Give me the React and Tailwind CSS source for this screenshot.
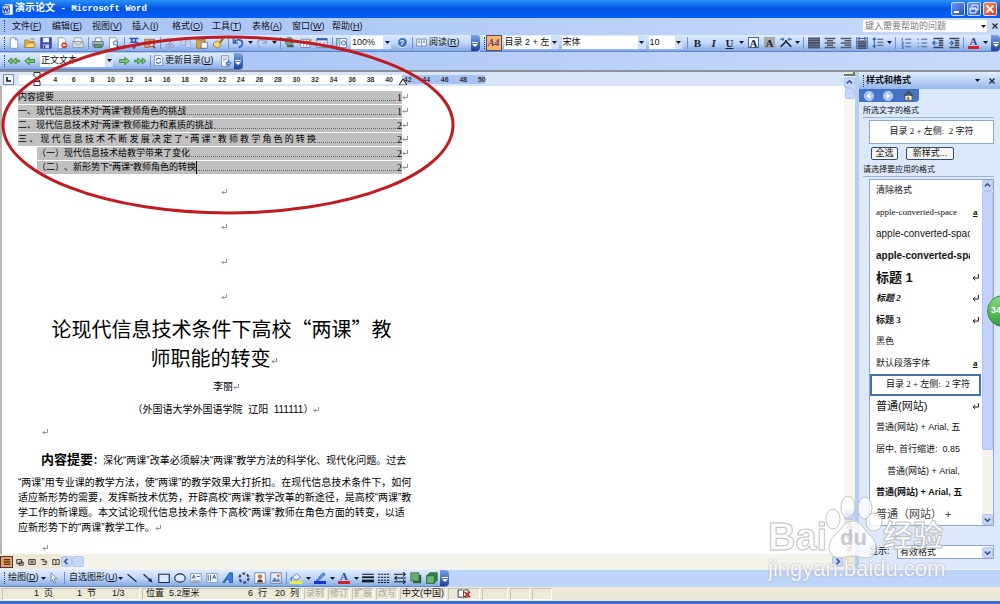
import { clsx } from 'clsx';

const menus = [
  ['文件', 'F'],
  ['编辑', 'E'],
  ['视图', 'V'],
  ['插入', 'I'],
  ['格式', 'O'],
  ['工具', 'T'],
  ['表格', 'A'],
  ['窗口', 'W'],
  ['帮助', 'H'],
];

const rulerMarks = Array.from({ length: 24 }, (_, i) => 4 + i * 2);

const toc = [
  { text: '内容提要', page: 1 },
  { text: '一、现代信息技术对“两课”教师角色的挑战', page: 1 },
  { text: '二、现代信息技术对“两课”教师能力和素质的挑战', page: 2 },
  { text: '三、现代信息技术不断发展决定了“两课”教师教学角色的转换', page: 2, spread: true },
  { text: '（一）现代信息技术给教学带来了变化', page: 2, indent: true },
  { text: '（二）、新形势下“两课”教师角色的转换', page: 2, indent: true, caret: true },
];

const bodyLines = [
  '“两课”用专业课的教学方法，使“两课”的教学效果大打折扣。在现代信息技术条件下，如何',
  '适应新形势的需要，发挥新技术优势，开辟高校“两课”教学改革的新途径，是高校“两课”教',
  '学工作的新课题。本文试论现代信息技术条件下高校“两课”教师在角色方面的转变，以适',
];

const styles = [
  { name: '清除格式', look: 'text-[9px]' },
  { name: 'apple-converted-space', look: "text-[9px] font-['Liberation_Serif',serif]", mark: 'a' },
  { name: 'apple-converted-space', look: 'text-[10px]' },
  { name: 'apple-converted-space', look: 'text-[10px] font-bold' },
  { name: '标题 1', look: 'text-[13px] font-bold', mark: 'p' },
  { name: '标题 2', look: "text-[9px] font-bold italic font-['Liberation_Serif','Noto_Sans_CJK_SC',serif]", mark: 'p' },
  { name: '标题 3', look: "text-[9px] font-bold font-['Liberation_Serif','Noto_Sans_CJK_SC',serif]", mark: 'p' },
  { name: '黑色', look: 'text-[9px]' },
  { name: '默认段落字体', look: 'text-[9px]', mark: 'a' },
  { name: '目录 2 + 左侧:  2 字符', look: "text-[9px] pl-[10px] font-['Liberation_Serif','Noto_Sans_CJK_SC',serif]", selected: true },
  { name: '普通(网站)', look: 'text-[11px]', mark: 'p' },
  { name: '普通(网站) + Arial, 五', look: 'text-[9px]' },
  { name: '居中, 首行缩进:  0.85 ', look: 'text-[9px]' },
  { name: '普通(网站) + Arial,', look: 'text-[9px] pl-[11px]' },
  { name: '普通(网站) + Arial, 五', look: 'text-[9px] font-bold' },
  { name: '普通（网站） + ', look: 'text-[11px] text-[#444]' },
];

const art = {
  page: <path d="M3 1h7l3 3v11H3zM10 1v3h3" fill="#fff" stroke="#6b7fa8" />,
  open: (
    <>
      <path d="M1 4h5l1 2h6v8H1z" fill="#e8b23c" stroke="#a87818" />
      <path d="M1 14l3-6h11l-2 6z" fill="#ffd873" stroke="#a87818" />
      <path d="M9 3c2-2 4-1 4 1" fill="none" stroke="#3a58a0" />
    </>
  ),
  save: (
    <>
      <path d="M1 1h14v14H1z" fill="#4550b8" stroke="#2a3080" />
      <path d="M4 1h8v6H4z" fill="#f0f2fc" />
      <path d="M4 10h8v5H4z" fill="#c8cce8" />
      <path d="M5 11h2v4H5z" fill="#2a3080" />
    </>
  ),
  perm: (
    <>
      <path d="M3 1h7l3 3v11H3z" fill="#fff" stroke="#7788aa" />
      <circle cx="11" cy="11" r="4" fill="#d4452e" />
      <path d="M9 11h4" stroke="#fff" strokeWidth="2" />
    </>
  ),
  mail: (
    <>
      <path d="M4 1h8l2 5H2z" fill="#f5f5f5" stroke="#8890a0" />
      <path d="M1 6h14v8H1z" fill="#d8dce4" stroke="#8890a0" />
      <path d="M1 6l7 5 7-5" fill="none" stroke="#8890a0" />
    </>
  ),
  print: (
    <>
      <path d="M4 6l1-5h7l1 5" fill="#fff" stroke="#607090" />
      <path d="M1 6h14v6H1z" fill="#a9b4bc" stroke="#506070" />
      <path d="M3 10h10v4H3z" fill="#5f9d70" stroke="#406850" />
    </>
  ),
  preview: (
    <>
      <path d="M2 1h8l2 3v11H2z" fill="#fff" stroke="#7788aa" />
      <circle cx="10" cy="8" r="3" fill="#bfe0f5" stroke="#506080" />
      <path d="M12 11l3 4" stroke="#506080" strokeWidth="2" />
    </>
  ),
  spell: (
    <>
      <path d="M2 2h12M5 2v5M10 2v5M3 7h9" stroke="#3050a8" strokeWidth="2" />
      <path d="M5 11l3 4 6-8" fill="none" stroke="#5a48b8" strokeWidth="2" />
    </>
  ),
  research: (
    <>
      <path d="M1 3h6v11H1zM8 3h6v7H8z" fill="#e3a060" stroke="#9a5030" />
      <circle cx="10" cy="10" r="3" fill="#cfe4f8" stroke="#8a3020" />
      <path d="M12 12l3 3" stroke="#8a3020" strokeWidth="2" />
    </>
  ),
  cut: (
    <>
      <path d="M5 1l5 9M11 1L6 10" stroke="#94a6cc" strokeWidth="1.6" />
      <circle cx="5" cy="12" r="2.4" fill="none" stroke="#94a6cc" strokeWidth="1.6" />
      <circle cx="11" cy="12" r="2.4" fill="none" stroke="#94a6cc" strokeWidth="1.6" />
    </>
  ),
  copy: <path d="M1 2h7v9H1zM7 5h7v9H7z" fill="#c4d4f0" stroke="#94a6cc" />,
  paste: (
    <>
      <path d="M1 3h11v12H1z" fill="#e4a540" stroke="#94601c" />
      <path d="M4 1h5v3H4z" fill="#c8c8c8" stroke="#606060" />
      <path d="M7 7h8v8H7z" fill="#fff" stroke="#5068a0" />
    </>
  ),
  brush: (
    <>
      <path d="M9 7l5-6 2 2-5 6z" fill="#a06828" />
      <path d="M2 8l5-3 5 5-4 5-6-3z" fill="#f0dc70" stroke="#8a6a20" />
    </>
  ),
  undo: <path d="M2 2v6h6M3 7c3-5 11-4 11 1 0 3-2 5-5 6" fill="none" stroke="#2c5fc8" strokeWidth="2.2" />,
  redo: <path d="M14 2v6H8M13 7C10 2 2 3 2 8c0 3 2 5 5 6" fill="none" stroke="#94a9d4" strokeWidth="2" />,
  link: (
    <>
      <circle cx="7" cy="6" r="5.5" fill="#6aa888" stroke="#406878" />
      <path d="M3 4c3 3 6 0 8 3" stroke="#2858a8" fill="none" strokeWidth="2" />
      <path d="M4 12h4M8 12h5" stroke="#505860" strokeWidth="3" />
    </>
  ),
  tables: (
    <>
      <path d="M1 3h12v11H1zM1 7h12M5 3v11M9 3v11" fill="#fff" stroke="#5878b8" />
      <path d="M8 9l6-7 2 2-6 7z" fill="#e48c30" />
    </>
  ),
  columns: (
    <>
      <path d="M1 2h14v12H1z" fill="#eef4ff" stroke="#5878b8" />
      <path d="M1 3h14" stroke="#3860b0" strokeWidth="3" />
      <path d="M3 7h4M3 9h4M3 11h4M9 7h4M9 9h4M9 11h4" stroke="#8898b8" />
    </>
  ),
  docmap: (
    <>
      <path d="M1 2h13v12H1z" fill="#fff" stroke="#5878a0" />
      <path d="M1 2h4v12H1z" fill="#b8d4c0" stroke="#5878a0" />
      <circle cx="10" cy="8" r="3" fill="#c5e0f8" stroke="#405880" />
    </>
  ),
  book: <path d="M1 3h5l2 1 2-1h5v10h-5l-2 1-2-1H1zM8 4v10M3 6h3M3 8h3M10 6h3M10 8h3" fill="#f4f8ff" stroke="#5a6888" />,
  greenLeft: <path d="M1 8l6-5v3h7v4H7v3z" fill="#7cc860" stroke="#2c7838" />,
  greenRight: <path d="M15 8L9 3v3H2v4h7v3z" fill="#7cc860" stroke="#2c7838" />,
  greenLeft2: <path d="M0 8l5-4v3h2l4-3v3h5v2h-5v3L7 9H5v3z" fill="#7cc860" stroke="#2c7838" />,
  greenRight2: <path d="M16 8l-5-4v3H9L5 4v3H0v2h5v3l4-3h2v3z" fill="#7cc860" stroke="#2c7838" />,
  refresh: (
    <>
      <path d="M2 1h9l3 3v11H2z" fill="#fff" stroke="#60789c" />
      <path d="M5 8c0-4 6-4 6-1M11 9c0 4-6 4-6 1" fill="none" stroke="#2858a8" strokeWidth="1.5" />
    </>
  ),
  gotoToc: (
    <>
      <path d="M2 1h9v14H2z" fill="#fff" stroke="#60789c" />
      <path d="M4 4h5M4 6h5M4 8h3" stroke="#8090b0" />
      <path d="M8 10h3V7l4 4-4 4v-2H8z" fill="#80b0e8" stroke="#2858a8" />
    </>
  ),
  phonetic: (
    <>
      <path d="M1 13l7-7 7 7M8 7V4" fill="none" stroke="#18233c" strokeWidth="2.2" />
      <path d="M0 3h5M3 1l2 2-2 2M16 3h-5M13 1l-2 2 2 2" fill="none" stroke="#2c6cb0" strokeWidth="1.4" />
    </>
  ),
  alignFull: <path d="M0 2h16M0 5h16M0 8h16M0 11h16M0 14h16" stroke="#4c5468" strokeWidth="2.4" />,
  alignCenter: <path d="M1 2h14M4 5h8M1 8h14M4 11h8M1 14h14" stroke="#4c5468" strokeWidth="2.2" />,
  alignRight: <path d="M1 2h14M6 5h9M1 8h14M6 11h9M1 14h14" stroke="#4c5468" strokeWidth="2.2" />,
  distribute: (
    <>
      <path d="M2 6h12M2 9h12M2 12h12M2 15h12" stroke="#4c5468" strokeWidth="2.4" />
      <path d="M1 0v16M15 0v16M3 2h10M5 0L3 2l2 2M11 0l2 2-2 2" fill="none" stroke="#4468b0" strokeWidth="1.4" />
    </>
  ),
  spacing: (
    <>
      <path d="M7 3h8M7 7h8M7 11h8" stroke="#4c5468" strokeWidth="1.5" />
      <path d="M3 1v13M1 4l2-3 2 3M1 11l2 3 2-3" fill="none" stroke="#2c5fb0" strokeWidth="1.4" />
    </>
  ),
  numbered: <path d="M3 1v4M2 7h2v3H2M2 12h2v3H2M7 3h8M7 8h8M7 13h8" fill="none" stroke="#4866a4" strokeWidth="1.4" />,
  bullets: <path d="M2 3h2M2 8h2M2 13h2M7 3h8M7 8h8M7 13h8" stroke="#4866a4" strokeWidth="1.6" />,
  outdent: (
    <>
      <path d="M2 2h13M9 5h6M9 8h6M9 11h6M2 14h13" stroke="#3c4458" strokeWidth="1.8" />
      <path d="M7 8H1M4 5L1 8l3 3" fill="none" stroke="#2c5fb0" strokeWidth="1.6" />
    </>
  ),
  indent: (
    <>
      <path d="M2 2h13M9 5h6M9 8h6M9 11h6M2 14h13" stroke="#3c4458" strokeWidth="1.8" />
      <path d="M1 8h6M4 5l3 3-3 3" fill="none" stroke="#2c5fb0" strokeWidth="1.6" />
    </>
  ),
  pointer: <path d="M4 1l8 8H8l2 5-2 1-2-5-2 3z" fill="#fff" stroke="#5c6c94" />,
  line: <path d="M2 3l12 10" stroke="#1c2848" strokeWidth="1.6" />,
  arrow: (
    <>
      <path d="M2 3l9 8" stroke="#1c2848" strokeWidth="1.6" />
      <path d="M14 14l-6-2 4-4z" fill="#1c2848" />
    </>
  ),
  rect: <path d="M1 3h14v11H1z" fill="#dce8fc" stroke="#1c2848" strokeWidth="1.5" />,
  oval: <ellipse cx="8" cy="8" rx="7" ry="5.5" fill="#dce8fc" stroke="#1c2848" strokeWidth="1.5" />,
  textbox: (
    <>
      <path d="M1 2h14v12H1z" fill="#f0f4fc" stroke="#7888a8" />
      <path d="M3 9l2-5 2 5M4 7h2M9 6h4M3 12h10" fill="none" stroke="#303c58" />
    </>
  ),
  vtextbox: (
    <>
      <path d="M1 2h14v12H1z" fill="#f0f4fc" stroke="#7888a8" />
      <path d="M9 9l2-5 2 5M10 7h2M3 4v8M6 4v8" fill="none" stroke="#303c58" />
    </>
  ),
  wordart: <path d="M1 14L10 1h4v13h-4v-4H6l-2 4z" fill="#3c7cd8" stroke="#1c4c98" />,
  diagram: <circle cx="8" cy="8" r="6" fill="none" stroke="#404c78" strokeWidth="3" strokeDasharray="4 2.3" />,
  clipart: (
    <>
      <path d="M1 1h14v14H1z" fill="#fff" stroke="#5c6c8c" />
      <circle cx="8" cy="6" r="3" fill="#c87830" />
      <path d="M4 14c0-6 8-6 8 0z" fill="#503c34" />
    </>
  ),
  picture: (
    <>
      <path d="M1 1h14v14H1z" fill="#e4ecfa" stroke="#5c6c8c" />
      <path d="M2 13l4-6 3 4 2-3 3 5z" fill="#607cb8" />
      <circle cx="11" cy="5" r="1.6" fill="#d04c38" />
    </>
  ),
  fill: (
    <>
      <path d="M3 7l6-5 5 5-6 4z" fill="#e8eef8" stroke="#4c6088" />
      <path d="M3 7c-2 1-2 3-1 5" fill="none" stroke="#3c70c0" strokeWidth="1.6" />
      <path d="M0 12h16v4H0z" fill="#f0ec3c" />
    </>
  ),
  pen: (
    <>
      <path d="M4 10l8-9 3 2-8 8-4 1z" fill="#5c98d8" stroke="#3c5c90" />
      <path d="M0 12h16v4H0z" fill="#1430d8" />
    </>
  ),
  weights: (
    <>
      <path d="M0 3h16" stroke="#101828" strokeWidth="1.4" />
      <path d="M0 7h16" stroke="#101828" strokeWidth="2.4" />
      <path d="M0 12h16" stroke="#101828" strokeWidth="3.6" />
    </>
  ),
  dashes: <path d="M0 3h16M0 7h16M0 11h16M0 14h16" stroke="#101828" strokeWidth="1.4" strokeDasharray="3 1" />,
  arrows: <path d="M0 3h15M12 0l3 3-3 3M1 8h15M4 5L1 8l3 3M0 13h15M12 10l3 3-3 3" fill="none" stroke="#101828" strokeWidth="1.4" />,
  shadow: (
    <>
      <path d="M4 4h11v11H4z" fill="#345c40" />
      <path d="M1 1h11v11H1z" fill="#64b070" stroke="#347044" />
    </>
  ),
  cube: (
    <>
      <path d="M1 5l4-4h10v10l-4 4H1z" fill="#388448" stroke="#246034" />
      <path d="M1 5h10v10H1z" fill="#70b878" stroke="#246034" />
    </>
  ),
};

function Art({ name, className = 'size-3' }) {
  return (
    <svg viewBox="0 0 16 16" className={clsx('shrink-0', className)} aria-hidden="true">
      {art[name]}
    </svg>
  );
}

function Tool({ name, label, children }) {
  return (
    <button type="button" aria-label={label ?? name} className="flex h-4 w-4 shrink-0 items-center justify-center">
      {children ?? <Art name={name} />}
    </button>
  );
}

function Triangle() {
  return (
    <svg viewBox="0 0 5 3" className="h-[3px] w-[5px] shrink-0" aria-hidden="true">
      <path d="M0 0h5L2.5 3z" fill="#101828" />
    </svg>
  );
}

function Drop({ label }) {
  return (
    <button type="button" aria-label={label} className="flex h-4 w-2 shrink-0 items-center justify-center">
      <Triangle />
    </button>
  );
}

function Sep() {
  return (
    <span className="flex w-1 shrink-0 justify-center">
      <span className="h-3 w-px bg-[#6c92d4]" />
    </span>
  );
}

function Handle() {
  return <span className="mr-px ml-1 h-3 w-px shrink-0 border-l border-dotted border-[#27418c]" />;
}

function EndCap() {
  return (
    <button
      type="button"
      aria-label="工具栏选项"
      className="flex w-[9px] shrink-0 items-end justify-center self-stretch rounded-r-sm bg-linear-to-b from-[#7ba2e7] to-[#1c4296] pb-1"
    >
      <svg viewBox="0 0 6 5" className="h-[5px] w-1.5" aria-hidden="true">
        <path d="M0 0h6v1H0zM0 2h6L3 5z" fill="#fff" />
      </svg>
    </button>
  );
}

function Bar({ className, children }) {
  return (
    <div
      className={clsx(
        'flex h-[17px] items-center rounded-r-sm border-b border-[#5c84c8] bg-linear-to-b from-[#dfecff] via-[#c0d6f8] to-[#86aae4]',
        className,
      )}
    >
      {children}
    </div>
  );
}

function Combo({ label, value, className }) {
  return (
    <label className={clsx('mr-[3px] flex h-[13px] shrink-0 items-center bg-white', className)}>
      <select aria-label={label} className="h-[13px] min-w-0 flex-1 appearance-none overflow-hidden pl-px text-[9px] leading-[13px]">
        <option>{value}</option>
      </select>
      <span className="flex h-[13px] w-2 items-center justify-center bg-[#cfdff8]">
        <Triangle />
      </span>
    </label>
  );
}

function Mark({ className = 'size-[6px]', color = '#777' }) {
  return (
    <svg viewBox="0 0 6 6" className={clsx('inline-block shrink-0', className)} aria-hidden="true">
      <path d="M5.5 0v3.5H1M2.8 1.7L1 3.5l1.8 1.8" fill="none" stroke={color} strokeWidth="0.8" />
    </svg>
  );
}

function Hot({ text, letter }) {
  return (
    <>
      {text}(<u>{letter}</u>)
    </>
  );
}

function ScrollButton({ dir, className }) {
  const d = { up: 'M1 5l3-3 3 3', down: 'M1 3l3 3 3-3', left: 'M5 1L2 4l3 3', right: 'M3 1l3 3-3 3' }[dir];
  return (
    <button
      type="button"
      aria-label={dir}
      className={clsx('flex size-[11px] shrink-0 items-center justify-center rounded-xs border border-[#b4c8f4] bg-[#c6d6fb]', className)}
    >
      <svg viewBox="0 0 8 8" className="size-[7px]" aria-hidden="true">
        <path d={d} fill="none" stroke="#39558c" strokeWidth="1.8" />
      </svg>
    </button>
  );
}

function TitleBar() {
  const button = 'flex size-[14px] items-center justify-center rounded-xs border border-[#c8d8ff] bg-linear-to-br from-[#6c94f4] to-[#2450d0]';
  return (
    <header className="flex h-[18px] items-center bg-linear-to-b from-[#2a90f8] via-[#0452e2] to-[#0460fc] pr-[3px] pl-[2px] text-white">
      <svg viewBox="0 0 12 12" className="size-[11px]" aria-hidden="true">
        <path d="M3 0h9v12H3z" fill="#fff" stroke="#8098c8" />
        <path d="M0 2h8v8H0z" fill="#d8e4fc" stroke="#2c50a0" />
        <path d="M1 4l1.5 4L4 5l1.5 3L7 4" fill="none" stroke="#1c3c98" strokeWidth="1.2" />
      </svg>
      <h1 className="ml-[2px] flex flex-1 items-center font-['Liberation_Mono','Noto_Sans_CJK_SC',monospace] text-[9px] leading-3 font-bold whitespace-pre">
        <span className="text-[10px]">演示论文</span>
        <span> - Microsoft Word</span>
      </h1>
      <div className="flex gap-[2px]">
        <button type="button" aria-label="最小化" className={button}>
          <svg viewBox="0 0 10 10" className="size-[10px]">
            <path d="M1 7h5v2H1z" fill="#fff" />
          </svg>
        </button>
        <button type="button" aria-label="还原" className={button}>
          <svg viewBox="0 0 10 10" className="size-[10px]">
            <path d="M3 3V1h6v5H7M1 4h6v5H1zM1 5h6" fill="none" stroke="#fff" />
          </svg>
        </button>
        <button
          type="button"
          aria-label="关闭"
          className="flex size-[14px] items-center justify-center rounded-xs border border-[#f4d0c8] bg-linear-to-br from-[#ec8c68] to-[#cc3c14]"
        >
          <svg viewBox="0 0 10 10" className="size-[10px]">
            <path d="M1.5 1.5l7 7M8.5 1.5l-7 7" stroke="#fff" strokeWidth="1.8" />
          </svg>
        </button>
      </div>
    </header>
  );
}

function MenuBar() {
  return (
    <nav className="flex h-4 items-center">
      <Handle />
      <div className="flex flex-1 pl-[6px]">
        {menus.map(([text, letter]) => (
          <button key={letter} type="button" className="w-10 shrink-0 text-left text-[9px] leading-4">
            <Hot text={text} letter={letter} />
          </button>
        ))}
      </div>
      <div className="flex h-3 w-[124px] items-center bg-white">
        <input
          aria-label="帮助"
          placeholder="键入需要帮助的问题"
          className="h-3 min-w-0 flex-1 pl-[2px] text-[9px] leading-3 placeholder:text-[#777]"
        />
        <Drop label="最近的问题" />
      </div>
      <button type="button" aria-label="关闭窗口" className="ml-[2px] flex w-[11px] justify-center">
        <svg viewBox="0 0 6 6" className="size-[6px]">
          <path d="M0.5 0.5l5 5M5.5 0.5l-5 5" stroke="#222" strokeWidth="1.2" />
        </svg>
      </button>
    </nav>
  );
}

function StandardBar() {
  return (
    <Bar>
      <Handle />
      <Tool name="page" label="新建" />
      <Tool name="open" label="打开" />
      <Tool name="save" label="保存" />
      <Tool name="perm" label="权限" />
      <Tool name="mail" label="电子邮件" />
      <Sep />
      <Tool name="print" label="打印" />
      <Tool name="preview" label="打印预览" />
      <Sep />
      <Tool name="spell" label="拼写和语法" />
      <Tool name="research" label="信息检索" />
      <Sep />
      <Tool name="cut" label="剪切" />
      <Tool name="copy" label="复制" />
      <Tool name="paste" label="粘贴" />
      <Tool name="brush" label="格式刷" />
      <Sep />
      <Tool name="undo" label="撤消" />
      <Drop label="撤消列表" />
      <Tool name="redo" label="恢复" />
      <Drop label="恢复列表" />
      <Sep />
      <Tool name="link" label="超链接" />
      <Tool name="tables" label="表格和边框" />
      <Tool name="columns" label="分栏" />
      <Sep />
      <Tool name="docmap" label="文档结构图" />
      <Combo label="显示比例" value="100%" className="ml-px w-10" />
      <Tool label="帮助">
        <span className="flex size-[11px] items-center justify-center rounded-full border border-[#dce8fc] bg-[#3c74c4] text-[8px] font-bold text-white">
          ?
        </span>
      </Tool>
      <Sep />
      <button type="button" className="flex h-4 items-center gap-[2px] pr-[11px] pl-[2px] text-[9px] whitespace-nowrap">
        <Art name="book" className="size-[11px]" />
        <span>
          <Hot text="阅读" letter="R" />
        </span>
      </button>
      <EndCap />
    </Bar>
  );
}

function FormattingBar() {
  const glyph = "font-['Liberation_Serif',serif] text-[11px] leading-3 font-bold text-[#18233c]";
  return (
    <Bar className="min-w-0 flex-1 justify-between">
      <div className="flex items-center">
        <Handle />
        <button
          type="button"
          aria-label="格式窗格"
          className="mr-[2px] flex h-4 w-4 items-center justify-center border border-[#4b4b6f] bg-[#ffb468] font-['Liberation_Serif',serif] text-[10px] font-bold text-[#5c3c8c] italic"
        >
          A4
        </button>
        <Combo label="样式" value="目录 2 + 左" className="w-[55px]" />
        <Combo label="字体" value="宋体" className="w-[84px]" />
        <Combo label="字号" value="10" className="w-[34px]" />
        <Sep />
        <Tool label="加粗">
          <span className={glyph}>B</span>
        </Tool>
        <Tool label="倾斜">
          <span className={clsx(glyph, 'italic')}>I</span>
        </Tool>
        <Tool label="下划线">
          <span className={clsx(glyph, 'underline')}>U</span>
        </Tool>
        <Drop label="下划线样式" />
        <Tool label="字符边框">
          <span className={clsx(glyph, 'flex size-[11px] items-center justify-center border border-[#4c6494] bg-[#eef4ff]')}>A</span>
        </Tool>
        <Tool label="字符底纹">
          <span className={clsx(glyph, 'flex size-[11px] items-center justify-center bg-[#a8a8a8]')}>A</span>
        </Tool>
        <Tool name="phonetic" label="字符缩放" />
        <Drop label="字符缩放比例" />
        <Sep />
        <Tool name="alignFull" label="两端对齐" />
        <Tool name="alignCenter" label="居中" />
        <Tool name="alignRight" label="右对齐" />
        <Tool name="distribute" label="分散对齐" />
        <Tool name="spacing" label="行距" />
        <Drop label="行距值" />
        <Sep />
        <Tool name="numbered" label="编号" />
        <Tool name="bullets" label="项目符号" />
        <Tool name="outdent" label="减少缩进量" />
        <Tool name="indent" label="增加缩进量" />
        <Sep />
        <FontColor />
        <Drop label="颜色" />
      </div>
      <EndCap />
    </Bar>
  );
}

function FontColor() {
  return (
    <Tool label="字体颜色">
      <span className="border-b-[3px] border-[#d8201c] px-[2px] font-['Liberation_Serif',serif] text-[11px] leading-[9px] font-bold text-[#2c4c94]">
        A
      </span>
    </Tool>
  );
}

function OutlineBar() {
  return (
    <div className="flex h-[18px] items-center">
      <Bar>
        <Handle />
        <Tool name="greenLeft2" label="提升至标题 1" />
        <Tool name="greenLeft" label="提升" />
        <Combo label="大纲级别" value="正文文本" className="ml-[2px] w-[73px]" />
        <Tool name="greenRight" label="降低" />
        <Tool name="greenRight2" label="降为正文" />
        <Sep />
        <button type="button" className="flex h-4 items-center gap-px pl-px text-[9px] whitespace-nowrap">
          <Art name="refresh" className="size-[11px]" />
          <span>
            <Hot text="更新目录" letter="U" />
          </span>
        </button>
        <span className="w-1" />
        <Tool name="gotoToc" label="转到目录" />
        <EndCap />
      </Bar>
    </div>
  );
}

function Ruler() {
  return (
    <div className="flex h-[14px] items-center bg-[#d8e5f9]">
      <button
        type="button"
        aria-label="制表符"
        className="ml-[3px] flex size-[11px] items-center justify-center border border-[#7c8cb0] bg-[#eef3fc]"
      >
        <svg viewBox="0 0 5 5" className="size-[5px]">
          <path d="M1 0v4h4" fill="none" stroke="#111" strokeWidth="1.6" />
        </svg>
      </button>
      <div className="relative ml-[5px] flex h-[9px] w-[466px] bg-linear-to-r from-white from-[383px] to-[#a8c2f4] to-[383px]">
        <div className="ml-[27px] flex h-[9px] w-[445px] shrink-0 text-[7px] leading-[9px] font-bold text-[#333]">
          {rulerMarks.map((n) => (
            <span key={n} className="flex-1 text-center">
              {n}
            </span>
          ))}
        </div>
        <svg viewBox="0 0 8 15" className="absolute -top-[3px] left-[14px] h-[15px] w-2" aria-hidden="true">
          <path d="M1 0.5h6v3L4 6.500 1 3.500zM4 6.500l3 2.500H1zM1 9.500h6v4H1z" fill="#fff" stroke="#333" />
        </svg>
        <svg viewBox="0 0 8 6" className="absolute top-1 left-[380px] h-[6px] w-2" aria-hidden="true">
          <path d="M4 0l4 6H0z" fill="#fff" stroke="#111" />
        </svg>
      </div>
    </div>
  );
}

function TocRow({ row }) {
  return (
    <li className="flex h-[14px] items-center">
      <a
        href="#toc"
        className={clsx('flex h-[13px] shrink-0 items-center bg-[#c0c0c0] text-[9px] leading-[13px]', row.indent ? 'ml-[19px] w-[365px]' : 'w-[384px]')}
      >
        <span
          className={clsx('shrink-0 whitespace-nowrap', row.spread && 'w-[298px] [text-align-last:justify]', row.caret && 'border-r border-black')}
        >
          {row.text}
        </span>
        <span className="mx-px mt-[7px] flex-1 border-b border-dotted border-[#666]" />
        <span className="font-['Liberation_Serif',serif] text-[10px]">{row.page}</span>
      </a>
      <Mark />
    </li>
  );
}

function Document() {
  return (
    <article className="flex-1 border-l-2 border-[#b9b9b2] bg-white pt-1 pl-4 font-['Liberation_Sans','Noto_Sans_CJK_SC',sans-serif] text-[10px] text-black [text-spacing-trim:space-all]">
      <div className="w-[412px]">
        <ul id="toc">
          {toc.map((row) => (
            <TocRow key={row.text} row={row} />
          ))}
        </ul>
        {[0, 1, 2, 3].map((i) => (
          <p key={i} className="flex h-[35px] items-center justify-center">
            <Mark />
          </p>
        ))}
        <h2 className="w-[407px] text-center font-['Noto_Sans_CJK_SC',sans-serif] text-[20px] leading-[29px]">
          论现代信息技术条件下高校“两课”教
          <span className="block pr-4">
            师职能的转变
            <Mark />
          </span>
        </h2>
        <p className="w-[416px] text-center leading-[29px]">
          李丽
          <Mark />
        </p>
        <p className="w-[416px] text-center leading-[17px] whitespace-pre">
          （外国语大学外国语学院  辽阳  111111）
          <Mark />
        </p>
        <p className="flex h-7 items-center pl-6">
          <Mark />
        </p>
        <p className="pl-[23px] leading-7 whitespace-nowrap">
          <b className="text-[13px]">内容提要</b>
          <b>：</b>深化“两课”改革必须解决“两课”教学方法的科学化、现代化问题。过去
        </p>
        <p className="leading-[15px] whitespace-nowrap">
          {bodyLines.map((line) => (
            <span key={line} className="block">
              {line}
            </span>
          ))}
          应新形势下的“两课”教学工作。
          <Mark className="size-[6px]" />
        </p>
        <p className="flex h-4 items-end pl-6">
          <Mark />
        </p>
      </div>
    </article>
  );
}

function DocumentScroll() {
  return (
    <div className="flex w-[11px] shrink-0 flex-col items-center bg-[#f7f6ef]">
      <span className="mb-px h-1 w-full border-r-2 border-b-2 border-[#77746a] bg-[#ece9d8]" />
      <ScrollButton dir="up" />
      <span className="h-[11px] w-[10px] rounded-xs border border-[#b0c6f0] bg-[#c6d6fb]" />
      <span className="flex-1" />
      <ScrollButton dir="down" />
      <div className="flex h-[34px] w-full flex-col items-center justify-around bg-[#ece9d8]">
        <svg viewBox="0 0 8 8" className="size-[7px]">
          <path d="M1 4l3-3 3 3M1 7l3-3 3 3" fill="none" stroke="#222" />
        </svg>
        <svg viewBox="0 0 8 8" className="size-[7px]">
          <circle cx="4" cy="4" r="3" fill="none" stroke="#222" />
        </svg>
        <svg viewBox="0 0 8 8" className="size-[7px]">
          <path d="M1 1l3 3 3-3M1 4l3 3 3-3" fill="none" stroke="#222" />
        </svg>
      </div>
    </div>
  );
}

function ViewBar() {
  const views = [
    ['普通视图', 'M1 2h8M1 4h8M1 6h8M1 8h8'],
    ['Web 版式', 'M1 2h6v5H1zM4 5h5v4H4z'],
    ['页面视图', 'M1 2h8v6H1zM3 4h4M3 6h4'],
    ['大纲视图', 'M1 2h5M3 4h6M6 6h3M3 8h5'],
    ['阅读版式', 'M1 2h3l1 1 1-1h3v6H6L5 9 4 8H1zM5 3v5'],
  ];
  return (
    <div className="flex h-[15px] items-center bg-[#f5f4ec]">
      <div className="flex h-full items-center gap-px bg-[#ece9d8]">
        {views.map(([label, d], i) => (
          <button
            key={label}
            type="button"
            aria-label={label}
            className={clsx('flex h-3 items-center justify-center', i === 0 ? 'w-[13px] border border-[#44344c] bg-[#f09c5c]' : 'w-[11px]')}
          >
            <svg viewBox="0 0 10 10" className="size-[8px]">
              <path d={d} fill="none" stroke="#3c2c24" strokeWidth="1.2" />
            </svg>
          </button>
        ))}
      </div>
      <ScrollButton dir="left" />
      <span className="h-[11px] w-3 rounded-xs border border-[#b0c6f0] bg-[#c6d6fb]" />
      <span className="flex-1" />
      <ScrollButton dir="right" />
      <span className="h-full w-3 bg-[#ece9d8]" />
    </div>
  );
}

function StylePane() {
  const button = 'rounded-xs border border-[#2c4c74] bg-[#f6f5f0] text-[9px] leading-[11px]';
  return (
    <aside className="flex w-[145px] shrink-0 flex-col border-l-[4px] border-[#b4cef4] bg-[#dbe9fb] pb-[10px]">
      <header className="flex h-[17px] items-center bg-linear-to-b from-[#e2eefe] to-[#94b6ec]">
        <Handle />
        <h2 className="flex-1 pl-px text-[9px] font-bold">样式和格式</h2>
        <button type="button" aria-label="其他任务窗格" className="px-1">
          <Triangle />
        </button>
        <button type="button" aria-label="关闭" className="px-[5px]">
          <svg viewBox="0 0 6 6" className="size-[6px]">
            <path d="M0.5 0.5l5 5M5.5 0.5l-5 5" stroke="#222" strokeWidth="1.2" />
          </svg>
        </button>
      </header>
      <div className="flex h-[13px] w-[60px] items-center justify-around rounded-br-sm bg-[#4474c8]">
        {['M10 4L5 8l5 4M5 8h7', 'M6 4l5 4-5 4M11 8H4'].map((d) => (
          <button key={d} type="button" aria-label="导航" className="flex">
            <svg viewBox="0 0 16 16" className="size-[10px]">
              <circle cx="8" cy="8" r="7.500" fill="#a8c0ec" stroke="#d8e4fa" />
              <path d={d} fill="none" stroke="#fff" strokeWidth="2" />
            </svg>
          </button>
        ))}
        <button type="button" aria-label="开始" className="flex">
          <svg viewBox="0 0 16 16" className="size-[11px]">
            <path d="M3 8h10v7H3z" fill="#f8f0d8" stroke="#605040" />
            <path d="M1 8l7-7 7 7-2 1-5-5-5 5z" fill="#4c4038" />
            <path d="M6 10h3v5H6z" fill="#a87038" />
          </svg>
        </button>
      </div>
      <div className="flex flex-1 flex-col pr-[6px]">
        <h3 className="mt-[3px] ml-1 border-b border-[#9cb4d8] text-[8px] leading-[12px]">所选文字的格式</h3>
        <div className="mt-[2px] ml-[10px] flex h-6 shrink-0 items-center justify-center border border-[#8ca8d0] bg-white font-['Liberation_Serif','Noto_Sans_CJK_SC',serif] text-[9px] whitespace-pre">
          目录 2 + 左侧:  2 字符
        </div>
        <div className="mt-[3px] ml-[12px] flex gap-2">
          <button type="button" className={clsx(button, 'w-[27px]')}>
            全选
          </button>
          <button type="button" className={clsx(button, 'w-[48px]')}>
            新样式...
          </button>
        </div>
        <h3 className="mt-1 ml-1 border-b border-[#9cb4d8] text-[8px] leading-[12px]">请选择要应用的格式</h3>
        <div className="mt-[2px] ml-[10px] flex flex-1 border border-[#8ca8d0] bg-white">
          <ul className="flex min-w-0 flex-1 flex-col">
            {styles.map((style, i) => (
              <li key={i} className="flex flex-1">
                <button
                  type="button"
                  className={clsx('flex min-w-0 flex-1 items-center text-left', style.selected ? 'mr-px border-2 border-[#4472a4] pl-1' : 'pl-[6px]')}
                >
                  <span className={clsx('h-[17px] overflow-hidden leading-[17px] whitespace-pre', style.selected ? 'w-full' : 'w-[94px]', style.look)}>
                    {style.name}
                  </span>
                  {style.mark === 'p' && <Mark className="ml-[2px] size-[7px]" color="#111" />}
                  {style.mark === 'a' && <u className="ml-[3px] font-['Liberation_Serif',serif] text-[9px] font-bold">a</u>}
                </button>
              </li>
            ))}
          </ul>
          <div className="flex w-[11px] flex-col bg-[#f4f3ec]">
            <ScrollButton dir="up" />
            <span className="flex-[4] rounded-xs border border-[#b0c4f4] bg-[#c4d2fa]" />
            <span className="flex-1" />
            <ScrollButton dir="down" />
          </div>
        </div>
        <label className="mt-[19px] ml-[10px] flex h-[14px] items-center text-[9px]">
          <span className="w-[28px]">显示:</span>
          <span className="flex h-[14px] flex-1 items-center border border-[#8ca8d0] bg-white">
            <select className="h-3 min-w-0 flex-1 appearance-none pl-[2px] text-[9px] leading-3">
              <option>有效格式</option>
            </select>
            <ScrollButton dir="down" />
          </span>
        </label>
      </div>
    </aside>
  );
}

function DrawingBar() {
  return (
    <div className="flex h-[18px] items-center border-t border-[#e8f0fc] bg-[#bed3f8]">
      <Bar>
        <Handle />
        <button type="button" className="flex w-[40px] items-center justify-between pl-[2px] text-[9px] whitespace-nowrap">
          <span>
            <Hot text="绘图" letter="D" />
          </span>
          <Triangle />
        </button>
        <Tool name="pointer" label="选择对象" />
        <Sep />
        <button type="button" className="mr-[2px] flex w-[56px] items-center justify-between pl-[3px] text-[9px] whitespace-nowrap">
          <span>
            <Hot text="自选图形" letter="U" />
          </span>
          <Triangle />
        </button>
        <Tool name="line" label="直线" />
        <Tool name="arrow" label="箭头" />
        <Tool name="rect" label="矩形" />
        <Tool name="oval" label="椭圆" />
        <Tool name="textbox" label="文本框" />
        <Tool name="vtextbox" label="竖排文本框" />
        <Tool name="wordart" label="艺术字" />
        <Tool name="diagram" label="组织结构图" />
        <Tool name="clipart" label="剪贴画" />
        <Tool name="picture" label="图片" />
        <Sep />
        <Tool name="fill" label="填充颜色" />
        <Drop label="填充" />
        <Tool name="pen" label="线条颜色" />
        <Drop label="线条" />
        <FontColor />
        <Drop label="字体" />
        <Tool name="weights" label="线型" />
        <Tool name="dashes" label="虚线线型" />
        <Tool name="arrows" label="箭头样式" />
        <Tool name="shadow" label="阴影样式" />
        <Tool name="cube" label="三维效果样式" />
        <EndCap />
      </Bar>
    </div>
  );
}

function StatusBar() {
  const cell = 'mr-[2px] flex h-3 shrink-0 items-center border border-t-[#c8c4b4] border-l-[#c8c4b4] border-r-white border-b-white whitespace-pre';
  return (
    <footer className="flex h-[14px] items-center bg-[#ece9d8] pl-[2px] font-['Liberation_Sans','Noto_Sans_CJK_SC',sans-serif] text-[9px]">
      <div className={clsx(cell, 'w-[138px] pl-[31px]')}>
        <span className="w-[43px]">1  页</span>
        <span className="w-[35px]">1  节</span>
        <span>1/3</span>
      </div>
      <div className={clsx(cell, 'w-[160px] pl-[3px]')}>
        <span className="w-[102px]">位置  5.2厘米</span>
        <span className="w-[27px]">6  行</span>
        <span>20  列</span>
      </div>
      {['录制', '修订', '扩展', '改写'].map((mode) => (
        <div key={mode} className={clsx(cell, 'w-[22px] justify-center text-[#aaa694]')}>
          {mode}
        </div>
      ))}
      <div className={clsx(cell, 'w-[46px] justify-center')}>中文(中国)</div>
      <div className={clsx(cell, 'w-8 justify-center')}>
        <svg viewBox="0 0 16 11" className="h-[10px] w-[15px]" aria-label="拼写检查状态">
          <path d="M1 1h5l1 1 1-1h4v8H8L7 10 6 9H1zM7 2v7" fill="#fff" stroke="#333" />
          <path d="M8 3l6 6M14 3l-6 6" stroke="#c02020" strokeWidth="1.8" />
        </svg>
      </div>
      <div className={clsx(cell, 'w-[26px]')} />
      <div className={clsx(cell, 'w-[20px]')} />
      <div className={clsx(cell, 'w-[20px]')} />
    </footer>
  );
}

function Watermark() {
  const outline = 'text-white/80 [-webkit-text-stroke:1px_rgba(176,176,176,0.8)]';
  return (
    <div className="pointer-events-none absolute right-[54px] bottom-[20px] h-[88px] w-[178px] font-['Liberation_Sans','Noto_Sans_CJK_SC',sans-serif]">
      <svg viewBox="0 0 178 88" className="absolute inset-0" aria-hidden="true">
        <g fill="#fff" fillOpacity="0.78" stroke="#bcbcbc" strokeOpacity="0.9">
          <ellipse cx="65" cy="23" rx="7" ry="10" />
          <ellipse cx="80" cy="11" rx="7" ry="11" />
          <ellipse cx="97" cy="12" rx="7" ry="11" />
          <ellipse cx="106" cy="26" rx="8" ry="9" />
          <path d="M85 25c8 0 10 8 17 14 9 8 8 23-4 23-5 0-8-2-13-2s-8 2-13 2c-13 0-14-15-5-23 7-6 9-14 18-14z" />
        </g>
      </svg>
      <span className={clsx('absolute top-[16px] left-0 text-[38px] leading-[50px] font-bold', outline)}>Bai</span>
      <span className="absolute top-[28px] left-[72px] text-[22px] leading-[28px] font-bold text-[#b8bcc4]/80">du</span>
      <span className={clsx('absolute top-[21px] left-[115px] text-[30px] leading-[38px] font-bold', outline)}>经验</span>
      <span className="absolute top-[61px] left-0 text-[22px] leading-[24px] text-white/90 [text-shadow:0_0_2px_#999]">jingyan.baidu.com</span>
    </div>
  );
}

export default function App() {
  return (
    <div className="relative flex min-h-screen flex-col overflow-hidden bg-[#bed3f8] font-['Liberation_Sans','Noto_Sans_CJK_SC',sans-serif] text-[9px] text-[#111]">
      <TitleBar />
      <div className="bg-linear-to-r from-[#a4c2f6] to-[#c8daf9]">
        <MenuBar />
        <div className="flex h-[18px] items-center">
          <StandardBar />
          <FormattingBar />
        </div>
        <OutlineBar />
      </div>
      <main className="flex flex-1 border-t-2 border-[#8c9099]">
        <section className="flex min-w-0 flex-1 flex-col">
          <div className="flex flex-1">
            <div className="flex min-w-0 flex-1 flex-col">
              <Ruler />
              <Document />
            </div>
            <DocumentScroll />
          </div>
          <ViewBar />
        </section>
        <StylePane />
      </main>
      <DrawingBar />
      <StatusBar />
      <div className="h-[3px] bg-[#3a6ccc]" />

      <svg viewBox="0 0 460 182" className="pointer-events-none absolute top-[34px] left-0 h-[182px] w-[460px]" aria-hidden="true">
        <ellipse cx="228" cy="91" rx="225" ry="88" fill="none" stroke="#c01c20" strokeWidth="3" />
      </svg>
      <div className="absolute top-[295px] -right-[19px] flex size-8 items-center rounded-full border border-[#2c9038] bg-linear-to-b from-[#8cdc80] to-[#2ca03c] pl-[3px] text-[9px] font-bold text-white">
        34
      </div>
      <Watermark />
    </div>
  );
}
